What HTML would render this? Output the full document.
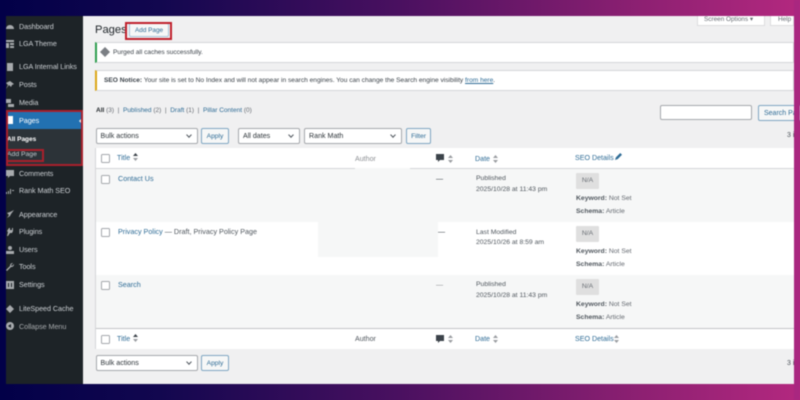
<!DOCTYPE html>
<html><head><meta charset="utf-8">
<style>
html,body{margin:0;padding:0}
body{width:800px;height:400px;position:relative;overflow:hidden;background:linear-gradient(90deg,#020048 0,#12074f 20%,#4a1060 50%,#8d2072 80%,#b3287f 100%);font-family:"Liberation Sans",sans-serif;font-size:7.1px;color:#3c434a}
#s{position:absolute;left:0;top:0;width:800px;height:400px;filter:blur(.5px)}
.a,.t{position:absolute}
.t{white-space:nowrap;line-height:10px}
.m{color:#ccd0d4;font-size:7.2px;left:19px;letter-spacing:-.05px}
.l{color:#2f6c96}
.sel{position:absolute;background:#fff;border:1px solid #a5a8ac;border-radius:2px;box-sizing:border-box;height:16px;line-height:15px;padding-left:4px;font-size:7.1px;color:#2c3338}
.sel:after{content:"";position:absolute;right:6px;top:4px;width:3px;height:3px;border-right:1.2px solid #50575e;border-bottom:1.2px solid #50575e;transform:rotate(45deg)}
.btn{position:absolute;background:#f6f7f7;border:1px solid #7fa6c2;border-radius:2px;box-sizing:border-box;height:16px;line-height:16px;text-align:center;font-size:6.7px;color:#2f6c96}
.cb{position:absolute;left:101px;width:7px;height:7px;border:1px solid #a5a8ac;border-radius:1.5px;background:#fff}
.n{position:absolute;left:95px;width:699px;background:#fff;border:1px solid #d5d6d8;border-left-width:2px;box-sizing:border-box}
.i{position:absolute;left:6px;width:8px;height:8px;fill:#a7aaad}
.na{position:absolute;left:576px;width:23px;height:16px;background:#dfdfdf;color:#6a6f75;text-align:center;line-height:16px;font-size:6.8px;border-radius:1px}
.d{font-size:6.8px;color:#50575e}
.k{font-size:6.8px;color:#646970}
.k b{color:#50575e}
b{font-weight:bold}
.ar{position:absolute;width:5px;height:8px}
</style></head><body>
<div id="s">
<div class="a" style="left:83px;top:16px;width:711px;height:368px;background:#f0f0f1"></div>
<div class="a" style="left:6px;top:16px;width:77px;height:368px;background:#1d2327"></div>
<div class="a" style="left:6px;top:112px;width:77px;height:17px;background:#2271b1"></div>
<div class="a" style="left:6px;top:129px;width:77px;height:36px;background:#2c3338"></div>
<div class="a" style="left:79px;top:116.500px;width:0;height:0;border:4px solid transparent;border-right-color:#f0f0f1;border-left:0"></div>

<svg class="i" style="top:22px" viewBox="0 0 8 8"><path d="M0 7a4 4 0 1 1 8 0z"/></svg>
<svg class="i" style="top:40px" viewBox="0 0 8 8"><path d="M0 0h8v2H0zM0 3h3v5H0zM4 3h4v2H4zM4 6h4v2H4z"/></svg>
<svg class="i" style="top:63px" viewBox="0 0 8 8"><path d="M1 0h6v8H1z"/></svg>
<svg class="i" style="top:81px" viewBox="0 0 8 8"><path d="M4 0l4 3-2 1-1 2-2-2-3 4 2-4-2-2 2-1z"/></svg>
<svg class="i" style="top:99px" viewBox="0 0 8 8"><path d="M0 0h5v4H0zM2 5h6v3H2z"/></svg>
<svg class="i" style="top:116px;fill:#fff" viewBox="0 0 8 8"><path d="M1 0h6v8H1z"/></svg>
<svg class="i" style="top:170px" viewBox="0 0 8 8"><path d="M0 0h8v6H4L2 8V6H0z"/></svg>
<svg class="i" style="top:187px" viewBox="0 0 8 8"><path d="M0 5h1v2H0zM2 4h1v3H2zM4 2h1v5H4zM6 3h2v1H6z"/></svg>
<svg class="i" style="top:210px" viewBox="0 0 8 8"><path d="M8 0L4 2 1 3 3 5 1 8l3-2 1-2z"/></svg>
<svg class="i" style="top:228px" viewBox="0 0 8 8"><path d="M3 0h1v2h2V0h1v3L6 5H4L2 8H1l1-4-1-1z"/></svg>
<svg class="i" style="top:246px" viewBox="0 0 8 8"><circle cx="4" cy="2" r="2"/><path d="M0 8V5h8v3z"/></svg>
<svg class="i" style="top:263px" viewBox="0 0 8 8"><path d="M8 1L6 3 5 2l2-2C5 0 4 1 4 3L0 7l1 1 4-4c2 0 3-1 3-3z"/></svg>
<svg class="i" style="top:281px" viewBox="0 0 8 8"><path d="M0 0h8v8H0z"/><path fill="#1d2327" d="M2 2h1v4H2zM5 2h1v4H5z"/></svg>
<svg class="i" style="top:305px" viewBox="0 0 8 8"><path d="M4 0l4 4-4 4-4-4z"/></svg>
<svg class="i" style="top:322px" viewBox="0 0 8 8"><circle cx="4" cy="4" r="4"/><path fill="#1d2327" d="M5 2v4L2 4z"/></svg>

<div class="t m" style="top:21.500px">Dashboard</div>
<div class="t m" style="top:39px">LGA Theme</div>
<div class="t m" style="top:62px">LGA Internal Links</div>
<div class="t m" style="top:80px">Posts</div>
<div class="t m" style="top:98px">Media</div>
<div class="t m" style="top:115.500px;color:#fff">Pages</div>
<div class="t" style="left:7px;top:135px;color:#fff;font-weight:bold;font-size:6.5px">All Pages</div>
<div class="t" style="left:7px;top:150px;color:#c3c8cd;font-size:6.8px">Add Page</div>
<div class="t m" style="top:169px">Comments</div>
<div class="t m" style="top:186px">Rank Math SEO</div>
<div class="t m" style="top:209.500px">Appearance</div>
<div class="t m" style="top:227px">Plugins</div>
<div class="t m" style="top:245px">Users</div>
<div class="t m" style="top:262px">Tools</div>
<div class="t m" style="top:280px">Settings</div>
<div class="t m" style="top:304px">LiteSpeed Cache</div>
<div class="t m" style="top:321.500px;color:#a7aaad">Collapse Menu</div>

<div class="t" style="left:95px;top:23px;font-size:11.2px;line-height:14px;color:#1d2327">Pages</div>
<div class="a" style="left:129px;top:23px;width:40px;height:14px;background:#f6f7f7;border:1px solid #a9c4d8;border-radius:2px;box-sizing:border-box"></div>
<div class="t l" style="left:135px;top:25.500px;font-size:6.4px">Add Page</div>

<div class="a" style="left:697px;top:16px;width:68px;height:10px;background:#fff;border:1px solid #dcdcde;border-top:0;box-sizing:border-box"></div>
<div class="t" style="left:704px;top:14.500px;font-size:6.4px;color:#646970">Screen Options &#9662;</div>
<div class="a" style="left:770px;top:16px;width:24px;height:10px;background:#fff;border:1px solid #dcdcde;border-top:0;box-sizing:border-box"></div>
<div class="t" style="left:778px;top:14.500px;font-size:6.4px;color:#646970">Help</div>

<div class="n" style="top:41.500px;height:21px;border-left-color:#2e9e4f"></div>
<svg class="a" style="left:100px;top:47px;width:10px;height:10px" viewBox="0 0 10 10"><path fill="#7b7f84" d="M5 0l5 5-5 5-5-5z"/></svg>
<div class="t" style="left:113px;top:47.500px;font-size:6.5px">Purged all caches successfully.</div>

<div class="n" style="top:70px;height:20.500px;border-left-color:#dba617"></div>
<div class="t" style="left:104px;top:76px;font-size:6.6px"><b>SEO Notice:</b> Your site is set to No Index and will not appear in search engines. You can change the Search engine visibility <span class="l" style="text-decoration:underline">from here</span>.</div>

<div class="t" style="left:96px;top:105.500px;font-size:6.5px;color:#646970"><b style="color:#1d2327">All</b> (3) &nbsp;|&nbsp; <span class="l">Published</span> (2) &nbsp;|&nbsp; <span class="l">Draft</span> (1) &nbsp;|&nbsp; <span class="l">Pillar Content</span> (0)</div>

<div class="a" style="left:660px;top:105px;width:92px;height:15px;background:#fff;border:1px solid #a5a8ac;border-radius:2px;box-sizing:border-box"></div>
<div class="btn" style="left:758px;top:104.500px;width:46px;height:16px;text-align:left;padding-left:5px;white-space:nowrap;font-size:7px">Search Pages</div>

<div class="sel" style="left:95.500px;top:128px;width:102.500px">Bulk actions</div>
<div class="btn" style="left:201px;top:128px;width:28px">Apply</div>
<div class="sel" style="left:238px;top:128px;width:62px">All dates</div>
<div class="sel" style="left:304px;top:128px;width:98px">Rank Math</div>
<div class="btn" style="left:406px;top:128px;width:25px">Filter</div>
<div class="t" style="left:787px;top:131px;font-size:7px;color:#50575e">3 items</div>

<!-- table -->
<div class="a" style="left:95px;top:148px;width:699px;height:201px;background:#fff;border-left:1px solid #d5d6d8;box-sizing:border-box"></div>
<div class="a" style="left:95px;top:168px;width:699px;height:1px;background:#d5d6d8"></div>
<div class="a" style="left:96px;top:169px;width:698px;height:53px;background:#f6f7f7"></div>
<div class="a" style="left:96px;top:275px;width:698px;height:53px;background:#f6f7f7"></div>
<div class="a" style="left:96px;top:328px;width:698px;height:1px;background:#c3c4c7"></div>
<div class="a" style="left:318px;top:222px;width:120px;height:35px;background:#f6f7f7"></div>
<div class="a" style="left:355px;top:168px;width:55px;height:2px;background:#f6f7f7"></div>

<div class="cb" style="top:154px"></div>
<div class="t l" style="left:117px;top:152.500px">Title</div>
<svg class="ar" style="left:133px;top:152.500px" viewBox="0 0 5 8"><path fill="#3c434a" d="M2.500 0L5 3H0z"/><path fill="#9a9da1" d="M2.500 8L0 5h5z"/></svg>
<div class="t" style="left:355px;top:154px;color:#8d9094">Author</div>
<svg class="a" style="left:436px;top:154px;width:8px;height:8px" viewBox="0 0 8 8"><path fill="#3c434a" d="M0 0h8v6H4L2 8V6H0z"/></svg>
<svg class="ar" style="left:448px;top:154.500px" viewBox="0 0 5 8"><path fill="#9a9da1" d="M2.500 0L5 3H0zM2.500 8L0 5h5z"/></svg>
<div class="t l" style="left:475px;top:154px">Date</div>
<svg class="ar" style="left:493px;top:154.500px" viewBox="0 0 5 8"><path fill="#9a9da1" d="M2.500 0L5 3H0zM2.500 8L0 5h5z"/></svg>
<div class="t l" style="left:575px;top:152.500px">SEO Details</div>
<svg class="a" style="left:615px;top:153px;width:7px;height:7px" viewBox="0 0 8 8"><path fill="#2f6c96" d="M6 0l2 2-5 5-3 1 1-3z"/></svg>

<div class="cb" style="top:175px"></div>
<div class="t l" style="left:118px;top:173.500px;font-size:7.2px">Contact Us</div>
<div class="t" style="left:436px;top:174px">—</div>
<div class="t d" style="left:476px;top:174px">Published</div>
<div class="t d" style="left:476px;top:184.500px">2025/10/28 at 11:43 pm</div>
<div class="na" style="top:173px">N/A</div>
<div class="t k" style="left:576px;top:193.500px"><b>Keyword:</b> Not Set</div>
<div class="t k" style="left:576px;top:206.500px"><b>Schema:</b> Article</div>

<div class="cb" style="top:228px"></div>
<div class="t" style="left:118px;top:227px;font-size:7.2px;color:#50575e"><span class="l">Privacy Policy</span> — Draft, Privacy Policy Page</div>
<div class="t" style="left:438px;top:227px">—</div>
<div class="t d" style="left:476px;top:227.500px">Last Modified</div>
<div class="t d" style="left:476px;top:237.500px">2025/10/26 at 8:59 am</div>
<div class="na" style="top:226px">N/A</div>
<div class="t k" style="left:576px;top:246.500px"><b>Keyword:</b> Not Set</div>
<div class="t k" style="left:576px;top:259.500px"><b>Schema:</b> Article</div>

<div class="cb" style="top:281px"></div>
<div class="t l" style="left:118px;top:279.500px;font-size:7.2px">Search</div>
<div class="t" style="left:436px;top:280px;color:#8d9094">—</div>
<div class="t d" style="left:476px;top:280px">Published</div>
<div class="t d" style="left:476px;top:290.500px">2025/10/28 at 11:43 pm</div>
<div class="na" style="top:279px">N/A</div>
<div class="t k" style="left:576px;top:299.500px"><b>Keyword:</b> Not Set</div>
<div class="t k" style="left:576px;top:312.500px"><b>Schema:</b> Article</div>

<div class="cb" style="top:335px"></div>
<div class="t l" style="left:117px;top:333.500px">Title</div>
<svg class="ar" style="left:133px;top:334px" viewBox="0 0 5 8"><path fill="#3c434a" d="M2.500 0L5 3H0z"/><path fill="#9a9da1" d="M2.500 8L0 5h5z"/></svg>
<div class="t" style="left:355px;top:334px;color:#50575e">Author</div>
<svg class="a" style="left:436px;top:335px;width:8px;height:8px" viewBox="0 0 8 8"><path fill="#3c434a" d="M0 0h8v6H4L2 8V6H0z"/></svg>
<svg class="ar" style="left:448px;top:335px" viewBox="0 0 5 8"><path fill="#9a9da1" d="M2.500 0L5 3H0zM2.500 8L0 5h5z"/></svg>
<div class="t l" style="left:475px;top:334px">Date</div>
<svg class="ar" style="left:493px;top:335px" viewBox="0 0 5 8"><path fill="#9a9da1" d="M2.500 0L5 3H0zM2.500 8L0 5h5z"/></svg>
<div class="t l" style="left:575px;top:334px">SEO Details</div>
<svg class="ar" style="left:614px;top:335px" viewBox="0 0 5 8"><path fill="#9a9da1" d="M2.500 0L5 3H0zM2.500 8L0 5h5z"/></svg>

<div class="sel" style="left:95.500px;top:355px;width:102.500px">Bulk actions</div>
<div class="btn" style="left:201px;top:355px;width:28px">Apply</div>
<div class="t" style="left:787px;top:359px;font-size:7px;color:#50575e">3 items</div>

<!-- cover overflow on right -->
<div class="a" style="left:794px;top:0;width:6px;height:400px;background:#a92780"></div>

<!-- red highlights -->
<div class="a" style="left:125px;top:22px;width:47px;height:18px;border:2px solid #c0202c;box-sizing:border-box"></div>
<div class="a" style="left:6px;top:110px;width:77px;height:56px;border:2px solid #a8202c;box-sizing:border-box"></div>
<div class="a" style="left:6px;top:149px;width:38px;height:13px;border:2px solid #a8202c;box-sizing:border-box"></div>
</div>
</body></html>
